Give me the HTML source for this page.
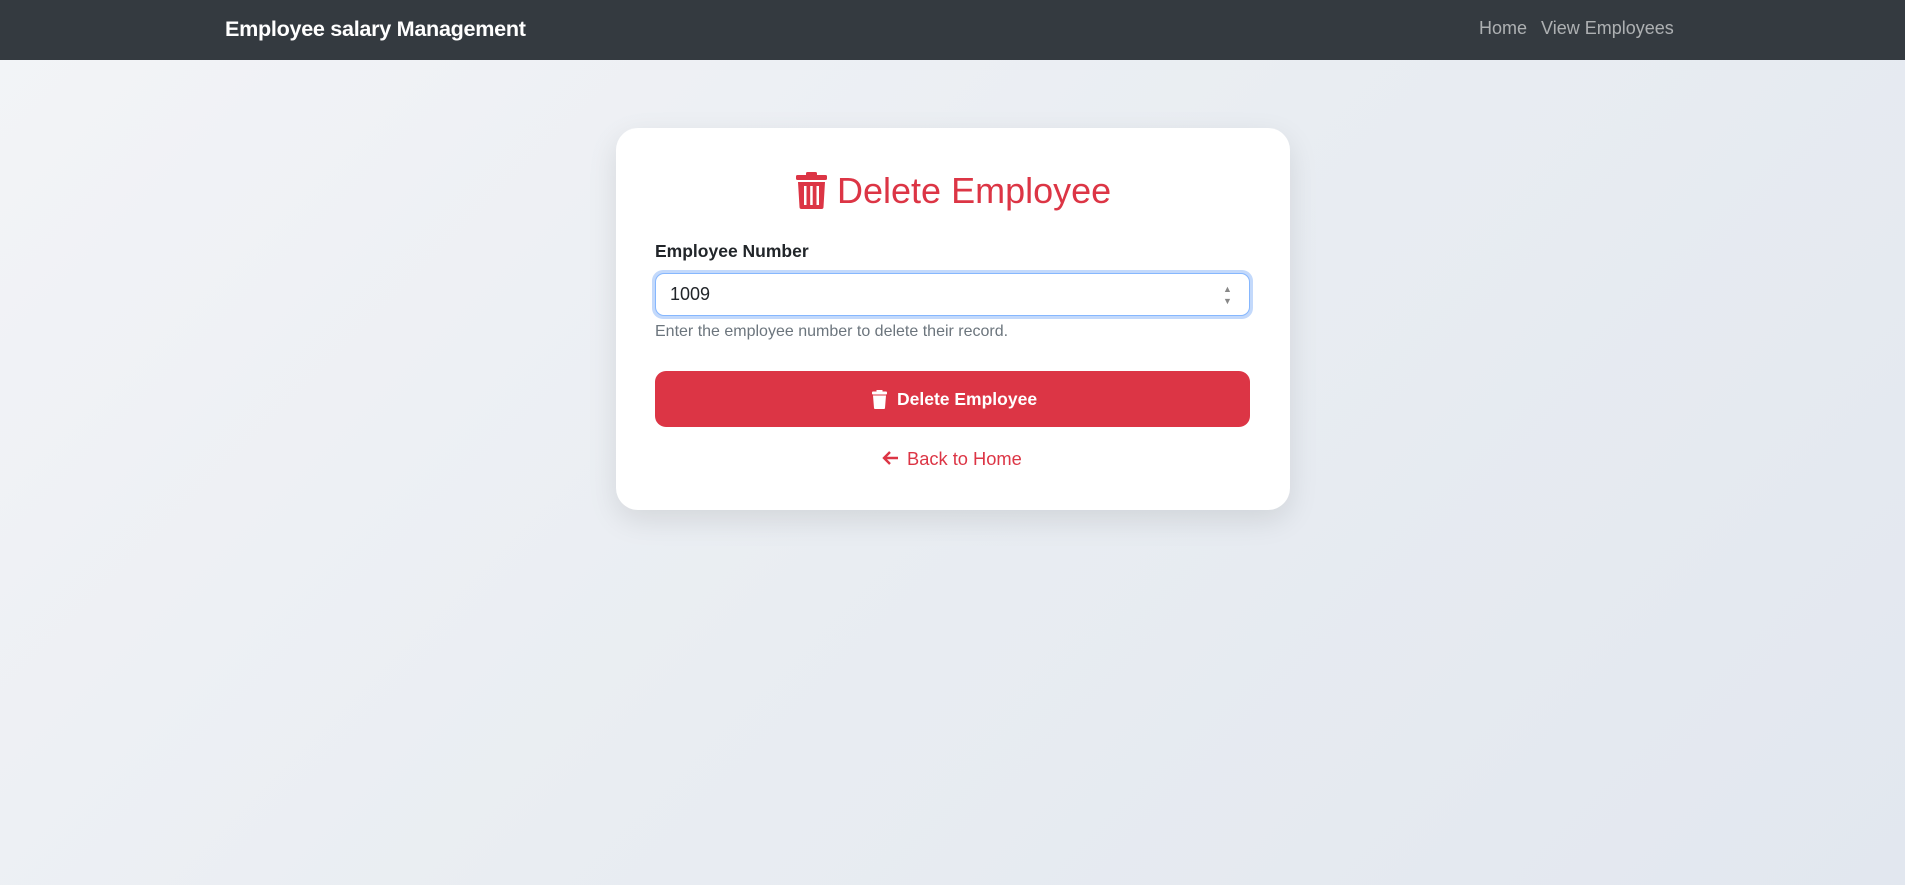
<!DOCTYPE html>
<html><head><meta charset="utf-8"><style>
*{box-sizing:border-box;margin:0;padding:0}
body{width:1905px;height:885px;overflow:hidden;font-family:"Liberation Sans",sans-serif;background:linear-gradient(135deg,#f3f4f7 0%,#e9edf2 50%,#e2e7ef 100%);position:relative}
.nav{position:absolute;left:0;top:0;width:1905px;height:60px;background:#343a40}
.brand{position:absolute;left:225px;top:16px;color:#fff;font-weight:bold;font-size:21.6px;letter-spacing:-0.3px}
.links{position:absolute;left:1479px;top:18px;color:rgba(255,255,255,.6);font-size:18px}
.links span{margin-right:14px}
.card{position:absolute;left:616px;top:128px;width:674px;height:382px;background:#fff;border-radius:22px;box-shadow:0 10px 30px rgba(0,0,0,.1)}
.abs{position:absolute}
</style></head><body>
<div class="nav"><div class="brand">Employee salary Management</div><div class="links"><span>Home</span><span>View Employees</span></div></div>
<div class="card"></div>
<svg class="abs" style="left:796px;top:172px" width="31" height="37" viewBox="0 0 31 37"><rect x="10" y="0" width="11" height="4" rx="1.5" fill="#dc3545"/><rect x="0" y="3" width="31" height="5" rx="1.5" fill="#dc3545"/><path d="M2 10h27l-1.5 25a2 2 0 0 1-2 2H5.5a2 2 0 0 1-2-2z" fill="#dc3545"/><rect x="8" y="14" width="2.5" height="19" fill="#fff"/><rect x="14.2" y="14" width="2.5" height="19" fill="#fff"/><rect x="20.5" y="14" width="2.5" height="19" fill="#fff"/></svg>
<div class="abs" style="left:837px;top:170px;color:#dc3545;font-size:36px">Delete Employee</div>
<div class="abs" style="left:655px;top:241px;font-weight:bold;font-size:17.5px;color:#212529">Employee Number</div>
<div class="abs" style="left:652px;top:270px;width:601px;height:49px;border-radius:11px;background:#c3d9fb"></div>
<div class="abs" style="left:655px;top:273px;width:595px;height:43px;border-radius:9px;background:#fff;border:1px solid #86b7fe"></div>
<div class="abs" style="left:670px;top:284px;font-size:18px;color:#212529">1009</div>
<div class="abs" style="left:1223px;top:283px;font-size:9px;color:#888;line-height:12px">▲<br>▼</div>
<div class="abs" style="left:655px;top:323px;font-size:16px;color:#6c757d">Enter the employee number to delete their record.</div>
<div class="abs" style="left:655px;top:371px;width:595px;height:56px;border-radius:11px;background:#dc3545"></div>
<svg class="abs" style="left:872px;top:390px" width="15" height="19" viewBox="0 0 15 19"><rect x="4.5" y="0" width="6" height="2" fill="#fff"/><rect x="0" y="1.5" width="15" height="3" rx="1" fill="#fff"/><path d="M1 5.5h13l-1 12.5a1 1 0 0 1-1 1H3a1 1 0 0 1-1-1z" fill="#fff"/></svg>
<div class="abs" style="left:897px;top:389px;font-size:17.5px;font-weight:bold;color:#fff">Delete Employee</div>
<svg class="abs" style="left:882px;top:450px" width="17" height="16" viewBox="0 0 17 16"><path d="M16 8H2M8 2L2 8l6 6" stroke="#dc3545" stroke-width="2.4" fill="none"/></svg>
<div class="abs" style="left:907px;top:448px;font-size:18.3px;color:#dc3545">Back to Home</div>
</body></html>
